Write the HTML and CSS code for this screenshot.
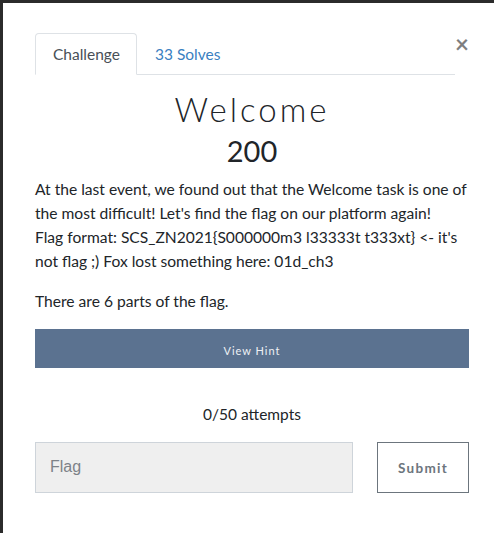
FILE: index.html
```html
<!DOCTYPE html>
<html>
<head>
<meta charset="utf-8">
<link rel="stylesheet" href="styles.css">
</head>
<body>
<div class="modal">
  <button class="close" aria-label="Close">&times;</button>
  <ul class="tabs">
    <li class="tab active">Challenge</li>
    <li class="tab link">33 Solves</li>
  </ul>
  <h2 class="title">Welcome</h2>
  <h3 class="value">200</h3>
  <p class="desc">At the last event, we found out that the Welcome task is one of the most difficult! Let's find the flag on our platform again!<br>Flag format: SCS_ZN2021{S000000m3 l33333t t333xt} &lt;- it's not flag ;) Fox lost something here: 01d_ch3</p>
  <p class="desc">There are 6 parts of the flag.</p>
  <button class="hint">View Hint</button>
  <p class="attempts">0/50 attempts</p>
  <div class="submit-row">
    <input class="flag" type="text" placeholder="Flag">
    <button class="submit">Submit</button>
  </div>
</div>
</body>
</html>
```

FILE: styles.css
```css
html, body {
  margin: 0;
  padding: 0;
  height: 100%;
  overflow: hidden;
}
body {
  background: #2b2b2b;
  font-family: "Lato", "Liberation Sans", sans-serif;
  color: #212529;
}
.modal {
  position: relative;
  margin: 3px 0 0 3px;
  background: #fff;
  height: 540px;
  padding: 30px 25px 0 32px;
  box-sizing: border-box;
}
.close {
  position: absolute;
  top: 29px;
  right: 25px;
  border: 0;
  background: none;
  font-family: "Lato", sans-serif;
  font-size: 24px;
  font-weight: 700;
  color: #000;
  opacity: .5;
  padding: 0;
  line-height: 1;
}
.tabs {
  display: flex;
  list-style: none;
  margin: 0 14px 0 0;
  padding: 0;
  border-bottom: 1px solid #dee2e6;
}
.tab {
  padding: 0 16px 0 17px;
  height: 40px;
  line-height: 40px;
  font-size: 15.5px;
  border: 1px solid transparent;
  border-top-left-radius: 4px;
  border-top-right-radius: 4px;
  margin-bottom: -1px;
}
.tab.active {
  color: #495057;
  border-color: #dee2e6 #dee2e6 #fff;
  background: #fff;
}
.tab.link {
  color: #3a7fc1;
}
.title {
  margin: 14px 0 0;
  text-align: center;
  font-family: "Lato", sans-serif;
  font-weight: 300;
  font-size: 33px;
  letter-spacing: 3px;
  line-height: 40px;
  color: #212529;
}
.value {
  margin: 4px 0 0;
  text-align: center;
  font-weight: 400;
  font-size: 29px;
  line-height: 36px;
}
.desc {
  margin: 8px -1px 0 0;
  font-size: 15.6px;
  line-height: 24px;
}
.desc + .desc {
  margin-top: 16px;
}
.hint {
  display: block;
  width: 100%;
  height: 39px;
  margin-top: 16px;
  border: 0;
  background: #5b7290;
  color: #eef1f5;
  font-family: "Lato", sans-serif;
  font-size: 11px;
  letter-spacing: 1px;
  padding-top: 4px;
}
.attempts {
  text-align: center;
  margin: 34px 0 0;
  font-size: 15.5px;
  line-height: 24px;
}
.submit-row {
  display: flex;
  gap: 24px;
  margin-top: 16px;
}
.flag {
  flex: 1;
  height: 51px;
  box-sizing: border-box;
  border: 1px solid #ced4da;
  background: #efefef;
  padding: 0 14px 2px;
  font-family: "Liberation Sans", Arial, sans-serif;
  font-size: 16px;
  color: #495057;
}
.flag::placeholder {
  color: #7d8288;
}
.submit {
  width: 92px;
  height: 51px;
  box-sizing: border-box;
  border: 1px solid #6c757d;
  background: #fff;
  color: #6c757d;
  font-family: "Lato", sans-serif;
  font-weight: 700;
  font-size: 13.5px;
  letter-spacing: 1.3px;
  padding-top: 2px;
}
```
